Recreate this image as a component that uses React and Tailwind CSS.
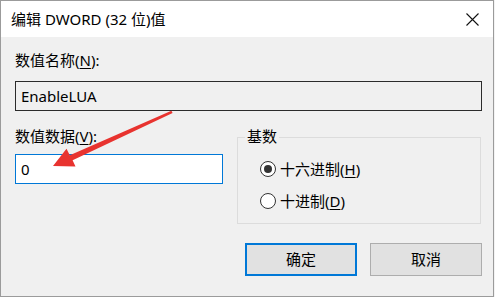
import React from "react";

const font = { fontFamily: '"Noto Sans", "Noto Sans CJK SC", sans-serif' };

function Radio({ checked, children }) {
  return (
    <div className="flex items-center h-[20px]">
      <div className="w-[16px] h-[16px] rounded-full border border-[#333333] bg-white flex items-center justify-center">
        {checked && <div className="w-[8px] h-[8px] rounded-full bg-[#333333]" />}
      </div>
      <span className="ml-[4px] text-[15px] leading-[20px] text-black">{children}</span>
    </div>
  );
}

export default function App() {
  return (
    <div className="w-[495px] h-[297px] bg-[#f3f3f3] relative overflow-hidden" style={font}>
      <div className="w-[494px] h-[297px] border-l border-t border-r border-b border-[#9b9b9b] bg-[#f0f0f0] flex flex-col">
        <div className="h-[36px] bg-white flex items-center justify-between pl-[10px] pr-[14px]">
          <span className="text-[15px] leading-[20px] text-black">编辑 DWORD (32 位)值</span>
          <svg width="13" height="13" viewBox="0 0 13 13" className="mr-[0px]">
            <path d="M0.5 0.5 L12.5 12.5 M12.5 0.5 L0.5 12.5" stroke="#111" strokeWidth="1.1" fill="none" />
          </svg>
        </div>
        <div className="flex flex-col pl-[14px] pt-[13px]">
          <div className="text-[15px] leading-[20px] text-black">
            数值名称(<span className="underline underline-offset-2">N</span>):
          </div>
          <div className="mt-[11px] w-[467px] h-[30px] border border-[#2b2b2b] flex items-center pl-[5px] text-[15px] text-black">
            EnableLUA
          </div>
          <div className="flex mt-[15px]">
            <div className="flex flex-col w-[208px]">
              <div className="text-[15px] leading-[20px] text-black">
                数值数据(<span className="underline underline-offset-2">V</span>):
              </div>
              <div className="mt-[8px] w-[208px] h-[30px] border border-[#0078d7] bg-white flex items-center pl-[5px] text-[15px] text-black">
                0
              </div>
            </div>
            <div className="ml-[14px] mt-[11px] w-[244px] h-[87px] border border-[#dcdcdc] relative flex flex-col pl-[22px] pt-[21px] gap-[12px]">
              <span className="absolute left-[7px] top-[-12px] px-[2px] bg-[#f0f0f0] text-[15px] leading-[20px] text-black">基数</span>
              <Radio checked>
                十六进制(<span className="underline underline-offset-2">H</span>)
              </Radio>
              <Radio>
                十进制(<span className="underline underline-offset-2">D</span>)
              </Radio>
            </div>
          </div>
          <div className="flex mt-[19px] ml-[230px] gap-[13px]">
            <div className="w-[112px] h-[33px] border-2 border-[#0078d7] bg-[#e1e1e1] flex items-center justify-center text-[15px] text-black">
              确定
            </div>
            <div className="w-[112px] h-[33px] border border-[#adadad] bg-[#e1e1e1] flex items-center justify-center text-[15px] text-black">
              取消
            </div>
          </div>
        </div>
      </div>
      <svg className="absolute left-0 top-0 pointer-events-none" width="495" height="297" viewBox="0 0 495 297">
        <polygon
          points="53,166 75.5,166.5 72.6,160.2 172.6,113 171.4,110.8 69.8,155.2 66.5,148.8"
          fill="#e8332f"
        />
      </svg>
    </div>
  );
}
